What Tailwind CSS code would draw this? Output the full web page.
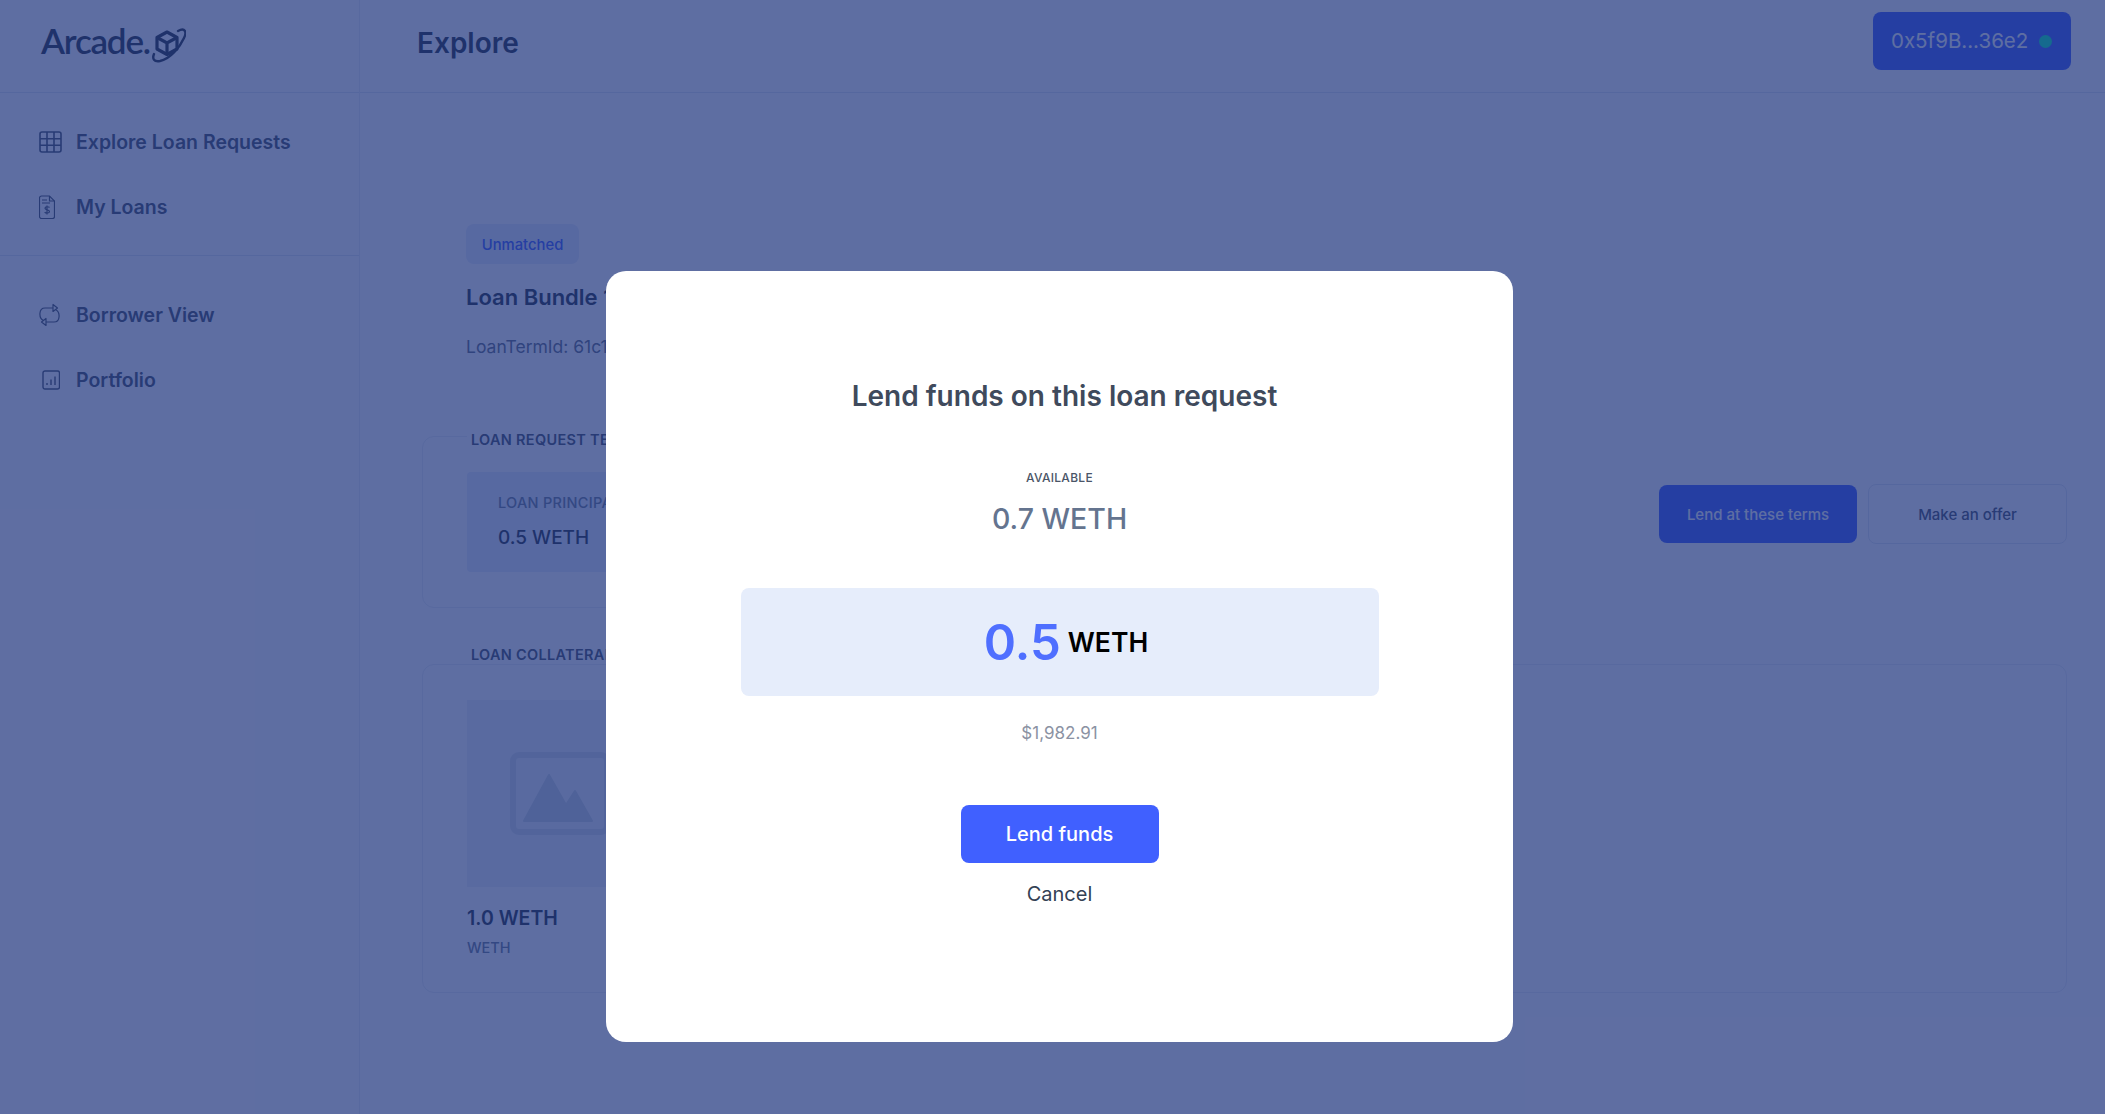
<!DOCTYPE html>
<html lang="en">
<head>
  <meta charset="UTF-8">
  <title>Arcade - Explore</title>
  <script src="https://cdn.jsdelivr.net/npm/@tailwindcss/browser@4"></script>
</head>
<body class="relative h-[1114px] overflow-hidden bg-white font-['Inter',sans-serif] text-[#2d3748]">
  <div class="flex h-full">
    <!-- sidebar -->
    <aside class="w-[360px] shrink-0 border-r border-[#e9edf3]">
      <div class="flex h-[93px] items-center border-b border-[#e2e8f0] pb-[8px] pl-[41px]">
        <span class="mb-[3px] font-['Lato',sans-serif] text-[35px] font-semibold tracking-[-1.2px] text-[#2d3748]">Arcade.</span>
        <svg class="ml-[2px] mt-[6px] h-[36px] w-[34px]" viewBox="0 0 34 36" fill="none" stroke="#2d3748">
          <path d="M15 5l10 5.500v11.500l-10 5.500-10-5.500V10.500z" stroke-width="3.200" stroke-linejoin="round"/>
          <path d="M5 10.500l10 5.500 10-5.500M15 16v11" stroke-width="3.200"/>
          <path d="M26 4C33 0 35 5 32 11 28 20 18 32 8 34 2 35 0 32 2 27" stroke-width="2.400" stroke-linecap="round"/>
        </svg>
      </div>
      <nav class="border-b border-[#e2e8f0] pb-[15px] pt-[17px]">
        <a class="flex h-[65px] items-center pl-[39px] text-[19.5px] font-semibold text-[#4a5568]">
          <svg class="mb-[2px] mr-[14px] h-[24px] w-[23px]" viewBox="0 0 23 24" fill="none" stroke="#4a5568" stroke-width="1.6"><rect x="1" y="2" width="21" height="20" rx="2"/><path d="M1 8.700h21M1 15.300h21M8 2v20M15 2v20"/></svg>
          Explore Loan Requests
        </a>
        <a class="flex h-[65px] items-center pl-[39px] text-[19.5px] font-semibold text-[#4a5568]">
          <svg class="mb-[2px] mr-[21px] h-[24px] w-[16px]" viewBox="0 0 16 24" fill="none" stroke="#4a5568" stroke-width="1.200"><path d="M2.500 1h8l5 5v15.500a2 2 0 0 1-2 2h-11a2 2 0 0 1-2-2v-18.500a2 2 0 0 1 2-2z"/><path d="M10.500 1v5h5M3 5h5M3 8h8M10.500 12.500c-.5-1-4.500-1.200-4.500.8s4.500 1.200 4.500 3.200-4 1.800-4.800.6M8 10.500v9"/></svg>
          My Loans
        </a>
      </nav>
      <nav class="pt-[27px]">
        <a class="flex h-[65px] items-center pl-[39px] text-[19.5px] font-semibold text-[#4a5568]">
          <svg class="mb-[2px] mr-[16px] h-[24px] w-[21px]" viewBox="0 0 21 24" fill="none" stroke="#4a5568" stroke-width="1.200" stroke-linejoin="round"><path d="M14 1.500v7l4.500-3.500zM7 15.500v7l-4.500-3.500z"/><path d="M14 5H6c-6.500 0-6.500 10-1.500 12.500M7 19h8c6.500 0 6.500-10 1.500-12.500"/></svg>
          Borrower View
        </a>
        <a class="flex h-[65px] items-center pl-[42px] text-[19.5px] font-semibold text-[#4a5568]">
          <svg class="mb-[2px] mr-[16px] h-[20px] w-[18px]" viewBox="0 0 18 20" fill="none" stroke="#4a5568" stroke-width="1.400"><rect x="1" y="1" width="16.500" height="18" rx="2"/><path d="M5 15v-2M9 15V9.500M13 15V6.500"/></svg>
          Portfolio
        </a>
      </nav>
    </aside>

    <!-- main -->
    <main class="min-w-0 flex-1">
      <header class="flex h-[93px] items-center justify-between border-b border-[#e2e8f0] pl-[57px] pr-[34px]">
        <h1 class="mb-[6px] text-[28px] font-semibold text-[#2d3748]">Explore</h1>
        <button class="mb-[10px] flex h-[58px] w-[198px] items-center rounded-[8px] bg-[#4060ff] pl-[18px] text-[20.5px] text-white">
          0x5f9B...36e2
          <span class="ml-[11px] h-[13px] w-[13px] rounded-full bg-[#0cf0bb]"></span>
        </button>
      </header>

      <div class="pl-[62px] pr-[38px] pt-[131px]">
        <div class="pl-[44px]">
          <span class="flex h-[40px] w-[113px] items-center justify-center rounded-[8px] bg-[#e6edfb] pt-[2px] text-[14.8px] font-medium text-[#4060ff]">Unmatched</span>
          <h2 class="mt-[18px] text-[22px] font-semibold leading-[30px] text-[#2d3748]">Loan Bundle 1</h2>
          <p class="mt-[23px] text-[17.5px] leading-[24px] text-[#667185]">LoanTermId: 61c1a4</p>
        </div>

        <div class="mt-[77px] flex items-start justify-between">
          <section class="relative h-[172px] w-[700px] rounded-[12px] border border-[#e9edf3] pl-[44px] pt-[35px]">
            <h3 class="absolute left-[44px] top-[-6px] bg-white px-[4px] text-[14.5px] font-semibold leading-[18px] tracking-[.3px] text-[#4a5568]">LOAN REQUEST TERMS</h3>
            <div class="h-[100px] w-[300px] rounded-[4px] bg-[#e6edfb] pl-[31px] pt-[21px]">
              <p class="text-[14.5px] font-medium leading-[20px] tracking-[.3px] text-[#718096]">LOAN PRINCIPAL</p>
              <p class="mt-[10px] text-[19px] font-medium leading-[30px] text-[#2d3748]">0.5 WETH</p>
            </div>
          </section>
          <div class="mt-[48px] flex items-center gap-[11px]">
            <button class="h-[58px] w-[198px] rounded-[8px] bg-[#4060ff] pt-[2px] text-[15px] font-medium text-white">Lend at these terms</button>
            <button class="h-[60px] w-[199px] rounded-[8px] border border-[#e2e8f0] pt-[2px] text-[15px] font-medium text-[#4a5568]">Make an offer</button>
          </div>
        </div>

        <section class="relative mt-[56px] h-[329px] rounded-[12px] border border-[#e9edf3] pl-[44px] pt-[35px]">
          <h3 class="absolute left-[44px] top-[-19px] bg-white px-[4px] text-[14.5px] font-semibold leading-[18px] tracking-[.3px] text-[#4a5568]">LOAN COLLATERAL</h3>
          <div class="flex h-[187px] w-[187px] items-center justify-center bg-[#edf2f7]">
            <svg class="mr-[2px] h-[83px] w-[100px]" viewBox="0 0 100 83" fill="none">
              <rect x="3" y="3" width="94" height="77" rx="6" stroke="#d5dde8" stroke-width="6"/>
              <path d="M14 69l25-46 17 30 9-14 17 30z" fill="#cbd5e0" stroke="#cbd5e0" stroke-width="2" stroke-linejoin="round"/>
            </svg>
          </div>
          <p class="mt-[17px] text-[19.5px] font-semibold leading-[28px] text-[#2d3748]">1.0 WETH</p>
          <p class="mt-[6px] text-[14.5px] font-medium leading-[20px] text-[#718096]">WETH</p>
        </section>
      </div>
    </main>
  </div>

  <!-- dim layer over the page -->
  <div class="absolute inset-0 bg-[#1a307a]/70"></div>

  <!-- modal -->
  <div class="absolute left-[606px] top-[271px] flex h-[771px] w-[907px] flex-col items-center rounded-[20px] bg-white pt-[106px]">
    <h2 class="ml-[10px] text-[28px] font-semibold leading-[38px] text-[#3f4a5c]">Lend funds on this loan request</h2>
    <p class="mt-[55px] text-[12px] font-medium leading-[16px] tracking-[.3px] text-[#4a5568]">AVAILABLE</p>
    <p class="mt-[13px] text-[28.5px] font-medium leading-[40px] text-[#64748f]">0.7 WETH</p>
    <div class="mt-[49px] flex h-[108px] w-[638px] items-center justify-center gap-[7px] rounded-[8px] bg-[#e6edfb] pl-[13px]">
      <span class="text-[49px] font-semibold leading-none text-[#4f6fff]">0.5</span>
      <span class="text-[26.5px] font-semibold leading-none text-black">WETH</span>
    </div>
    <p class="mt-[25px] text-[17px] leading-[24px] text-[#8b92a3]">$1,982.91</p>
    <button class="mt-[60px] h-[58px] w-[198px] rounded-[8px] bg-[#4060ff] text-[20px] font-medium text-white">Lend funds</button>
    <button class="mt-[18px] text-[20px] leading-[26px] text-[#334155]">Cancel</button>
  </div>
</body>
</html>
